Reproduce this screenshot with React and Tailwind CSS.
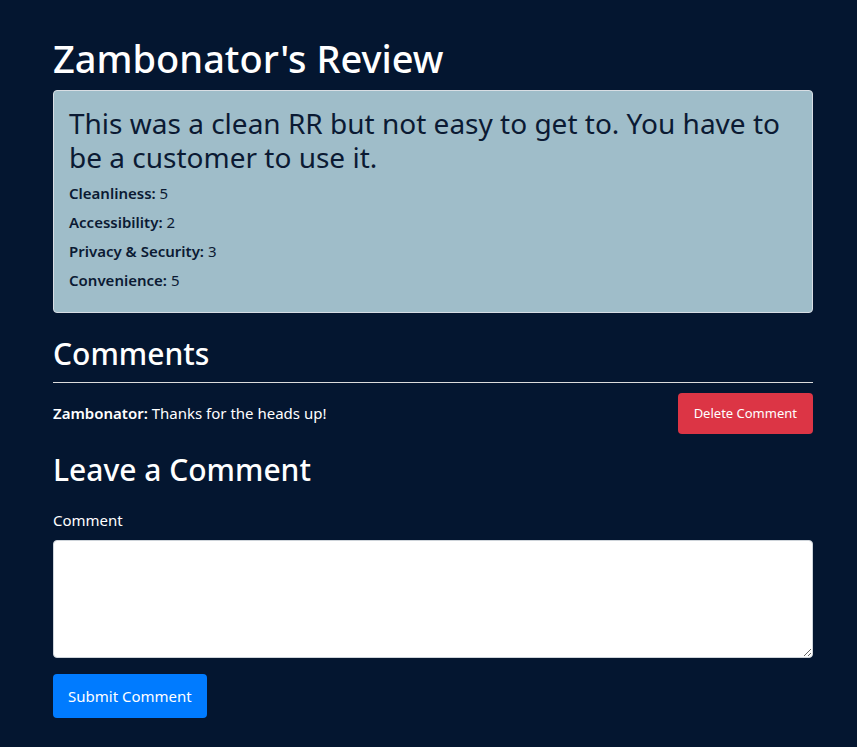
export default function App() {
  const ratings = [
    ['Cleanliness', 5],
    ['Accessibility', 2],
    ['Privacy & Security', 3],
    ['Convenience', 5],
  ];

  return (
    <div
      className="min-h-screen w-full bg-[#041630] text-white"
      style={{ fontFamily: '"Noto Sans", Lato, sans-serif' }}
    >
      <div className="w-[760px] ml-[53px] pt-[34px] pb-[29px]">
        <h1 className="text-[38px] leading-[48px] font-medium mb-[8px]">Zambonator's Review</h1>

        {/* Review card */}
        <div className="bg-[#9fbdc9] border border-[#d8dee4] rounded-[4px] px-[15px] pt-[15px] pb-[15px] text-[#0b1a33]">
          <h3 className="text-[28px] leading-[34px] mb-[7px]">
            This was a clean RR but not easy to get to. You have to be a customer to use it.
          </h3>
          {ratings.map(([label, value]) => (
            <p key={label} className="text-[15px] leading-[24px] mb-[5px]">
              <strong className="font-semibold">{label}:</strong> {value}
            </p>
          ))}
        </div>

        {/* Comments */}
        <h2 className="text-[30px] leading-[38px] font-medium mt-[22px] mb-[9px]">Comments</h2>
        <hr className="border-0 border-t border-[#dcdcdc] m-0" />
        <div className="flex items-center justify-between mt-[10px]">
          <p className="text-[15px]">
            <strong className="font-semibold">Zambonator:</strong> Thanks for the heads up!
          </p>
          <button className="h-[41px] px-[16px] bg-[#dc3545] rounded-[4px] text-[13px] text-white">
            Delete Comment
          </button>
        </div>

        <h2 className="text-[30px] leading-[38px] font-medium mt-[17px] mb-[19px]">Leave a Comment</h2>
        <form onSubmit={(e) => e.preventDefault()}>
          <label className="block text-[15px] leading-[24px] mb-[8px]">Comment</label>
          <textarea className="block w-full h-[118px] bg-white border border-[#ced4da] rounded-[4px] text-black p-2 outline-none" />
          <button
            type="submit"
            className="mt-[16px] h-[44px] px-[15px] bg-[#007bff] rounded-[4px] text-[15px] text-white"
          >
            Submit Comment
          </button>
        </form>
      </div>
    </div>
  );
}
